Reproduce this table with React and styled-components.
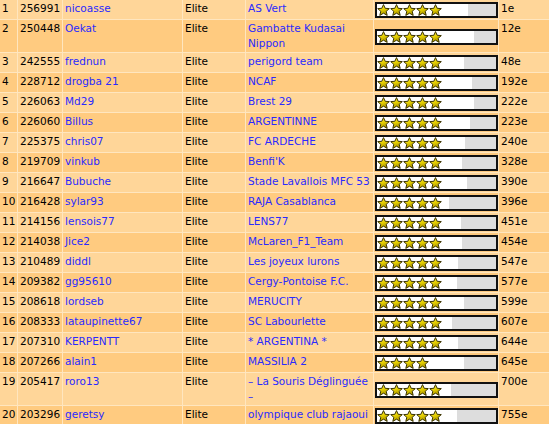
import React from 'react';
import styled, { createGlobalStyle } from 'styled-components';

const Global = createGlobalStyle`
  html, body { margin: 0; padding: 0; background: #FFE6BF; }
  body {
    font-family: "DejaVu Sans", Verdana, sans-serif;
    font-size: 10.5px;
    overflow: hidden;
  }
`;

const Table = styled.table`
  border-collapse: separate;
  border-spacing: 1px;
  margin: -1px 0 0 -1px;
  table-layout: fixed;
  width: 553px;
  background: #FFE6BF;
`;

const Col = styled.col`
  width: ${p => p.$w}px;
`;

const Row = styled.tr`
  background: ${p => (p.$dark ? '#FFCB80' : '#FFD699')};
`;

const Cell = styled.td`
  padding: 1px 2px;
  line-height: 15px;
  vertical-align: top;
  color: #000;
  white-space: ${p => (p.$nowrap ? 'nowrap' : 'normal')};
  overflow: hidden;
`;

const LinkCell = styled(Cell)`
  color: #2a2aff;
`;

const BarCell = styled.td`
  padding: 2px 0 1px 1px;
  vertical-align: middle;
`;

const Meter = styled.div`
  position: relative;
  box-sizing: border-box;
  width: 123px;
  height: 16px;
  border: 2px solid #111;
  background: #DDDDDD;
`;

const Fill = styled.div`
  height: 100%;
  background: #FFFFFF;
`;

const Stars = styled.div`
  position: absolute;
  left: 0;
  top: 0;
  display: flex;
`;

const StarSvg = styled.svg`
  display: block;
  width: 13px;
  height: 12px;
`;

const StarIcon = () => (
  <StarSvg viewBox="0 0 13 12">
    <defs>
      <linearGradient id="sg" x1="0" y1="0" x2="0.4" y2="1">
        <stop offset="0" stopColor="#FFF46A" />
        <stop offset="0.55" stopColor="#E6D000" />
        <stop offset="1" stopColor="#A89400" />
      </linearGradient>
    </defs>
    <polygon
      points="6.5,0.6 8.2,4.3 12.3,4.6 9.2,7.3 10.2,11.4 6.5,9.2 2.8,11.4 3.8,7.3 0.7,4.6 4.8,4.3"
      fill="url(#sg)"
      stroke="#3A3300"
      strokeWidth="1"
      strokeLinejoin="round"
    />
  </StarSvg>
);

const Bar = ({ fill, stars }) => (
  <Meter>
    <Fill style={{ width: `${fill}px` }} />
    <Stars>
      {Array.from({ length: stars }).map((_, i) => (
        <StarIcon key={i} />
      ))}
    </Stars>
  </Meter>
);

const columns = [17, 44, 119, 62, 127, 124, 52];

const rows = [
  [256991, 'nicoasse', 'AS Vert', 91, 5, '1e'],
  [250448, 'Oekat', 'Gambatte Kudasai Nippon', 97, 5, '12e'],
  [242555, 'frednun', 'perigord team', 87, 5, '48e'],
  [228712, 'drogba 21', 'NCAF', 95, 5, '192e'],
  [226063, 'Md29', 'Brest 29', 97, 5, '222e'],
  [226060, 'Billus', 'ARGENTINNE', 93, 5, '223e'],
  [225375, 'chris07', 'FC ARDECHE', 88, 5, '240e'],
  [219709, 'vinkub', "Benfi'K", 85, 5, '328e'],
  [216647, 'Bubuche', 'Stade Lavallois MFC 53', 90, 5, '390e'],
  [216428, 'sylar93', 'RAJA Casablanca', 72, 5, '396e'],
  [214156, 'lensois77', 'LENS77', 84, 5, '451e'],
  [214038, 'Jice2', 'McLaren_F1_Team', 85, 5, '454e'],
  [210489, 'diddl', 'Les joyeux lurons', 81, 5, '547e'],
  [209382, 'gg95610', 'Cergy-Pontoise F.C.', 80, 5, '577e'],
  [208618, 'lordseb', 'MERUCITY', 87, 5, '599e'],
  [208333, 'lataupinette67', 'SC Labourlette', 75, 5, '607e'],
  [207310, 'KERPENTT', '* ARGENTINA *', 81, 5, '644e'],
  [207266, 'alain1', 'MASSILIA 2', 87, 4, '645e'],
  [205417, 'roro13', '– La Souris Déglinguée –', 74, 5, '700e'],
  [203296, 'geretsy', 'olympique club rajaoui', 80, 5, '755e'],
];

export default function App() {
  return (
    <>
      <Global />
      <Table>
        <colgroup>
          {columns.map((w, i) => (
            <Col key={i} $w={w} />
          ))}
        </colgroup>
        <tbody>
          {rows.map(([pts, name, team, fill, stars, rank], i) => (
            <Row key={i} $dark={i % 2 === 1}>
              <Cell $nowrap>{i + 1}</Cell>
              <Cell $nowrap>{pts}</Cell>
              <LinkCell $nowrap>{name}</LinkCell>
              <Cell>Elite</Cell>
              <LinkCell>{team}</LinkCell>
              <BarCell>
                <Bar fill={fill} stars={stars} />
              </BarCell>
              <Cell>{rank}</Cell>
            </Row>
          ))}
        </tbody>
      </Table>
    </>
  );
}
